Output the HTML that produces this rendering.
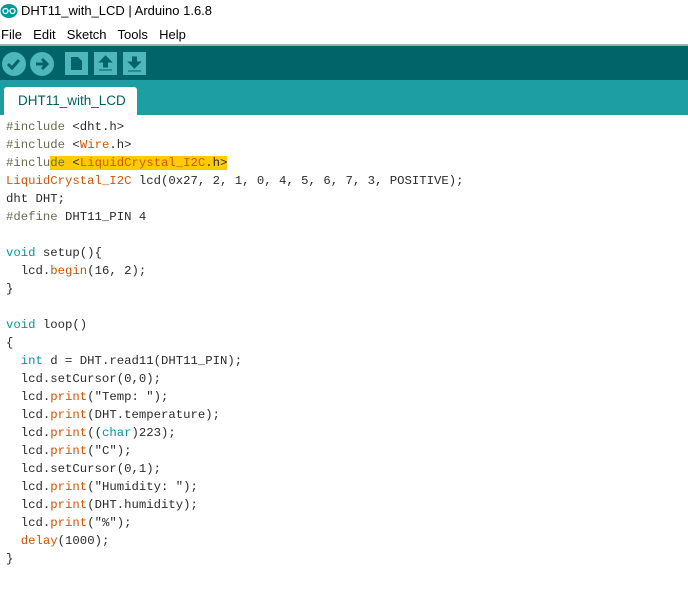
<!DOCTYPE html><html><head><style>
body{margin:0;width:688px;height:614px;background:#fff;font-family:"Liberation Sans",sans-serif;overflow:hidden;position:relative}
.abs{position:absolute}
pre{margin:0;font-family:"Liberation Mono",monospace;font-size:12.3px;line-height:18px;color:#2b2b2b;position:absolute;left:6px;top:118px}
.o{color:#d35400}.t{color:#00979c}.g{color:#6b6b4f}
.hl{background:#fc0}
</style></head><body>
<svg class="abs" style="left:0;top:3px" width="18" height="16"><ellipse cx="9" cy="8" rx="8.5" ry="7" fill="#00979c"/><circle cx="5.5" cy="8" r="2.5" fill="none" stroke="#fff" stroke-width="1.3"/><circle cx="12.5" cy="8" r="2.5" fill="none" stroke="#fff" stroke-width="1.3"/></svg>
<div class="abs" style="left:21px;top:3px;font-size:13px;color:#000">DHT11_with_LCD | Arduino 1.6.8</div>
<div class="abs" style="left:1px;top:27px;font-size:13px;color:#000;word-spacing:2px">File&nbsp; Edit&nbsp; Sketch&nbsp; Tools&nbsp; Help</div>
<div class="abs" style="left:0;top:44px;width:688px;height:2px;background:#aaa"></div>
<div class="abs" style="left:0;top:46px;width:688px;height:34px;background:#006468"></div>
<div class="abs" style="left:0;top:80px;width:688px;height:35px;background:#1c9ea2"></div>
<svg class="abs" style="left:0;top:48px" width="150" height="32">
<circle cx="14" cy="16" r="12" fill="#4db7bb"/><path d="M8 16l4 4 7-8" stroke="#006468" stroke-width="3" fill="none"/>
<circle cx="42" cy="16" r="12" fill="#4db7bb"/><path d="M36 16h10M42 11l5 5-5 5" stroke="#006468" stroke-width="3" fill="none"/>
<rect x="65" y="4" width="23" height="23" fill="#4db7bb"/><path d="M71 9h7l4 4v9h-11z" fill="#006468"/>
<rect x="94" y="4" width="23" height="23" fill="#4db7bb"/><path d="M105.5 8l-6 6h4v5h4v-5h4z M99 22h13" fill="#006468" stroke="#006468" stroke-width="1"/>
<rect x="123" y="4" width="23" height="23" fill="#4db7bb"/><path d="M134.5 20l-6-6h4v-5h4v5h4z M128 23h13" fill="#006468" stroke="#006468" stroke-width="1"/>
</svg>
<div class="abs" style="left:4px;top:87px;width:133px;height:28px;background:#fff;border-radius:3px 3px 0 0"></div>
<div class="abs" style="left:18px;top:93px;font-size:13.5px;color:#005f63">DHT11_with_LCD</div>
<pre><span class="g">#include</span> &lt;dht.h&gt;
<span class="g">#include</span> &lt;<span class="o">Wire</span>.h&gt;
<span class="g">#inclu</span><span class="hl"><span class="g">de</span> &lt;<span class="o">LiquidCrystal_I2C</span>.h&gt;</span>
<span class="o">LiquidCrystal_I2C</span> lcd(0x27, 2, 1, 0, 4, 5, 6, 7, 3, POSITIVE);
dht DHT;
<span class="g">#define</span> DHT11_PIN 4

<span class="t">void</span> setup(){
  lcd.<span class="o">begin</span>(16, 2);
}

<span class="t">void</span> loop()
{
  <span class="t">int</span> d = DHT.read11(DHT11_PIN);
  lcd.setCursor(0,0);
  lcd.<span class="o">print</span>("Temp: ");
  lcd.<span class="o">print</span>(DHT.temperature);
  lcd.<span class="o">print</span>((<span class="t">char</span>)223);
  lcd.<span class="o">print</span>("C");
  lcd.setCursor(0,1);
  lcd.<span class="o">print</span>("Humidity: ");
  lcd.<span class="o">print</span>(DHT.humidity);
  lcd.<span class="o">print</span>("%");
  <span class="o">delay</span>(1000);
}</pre>
</body></html>
